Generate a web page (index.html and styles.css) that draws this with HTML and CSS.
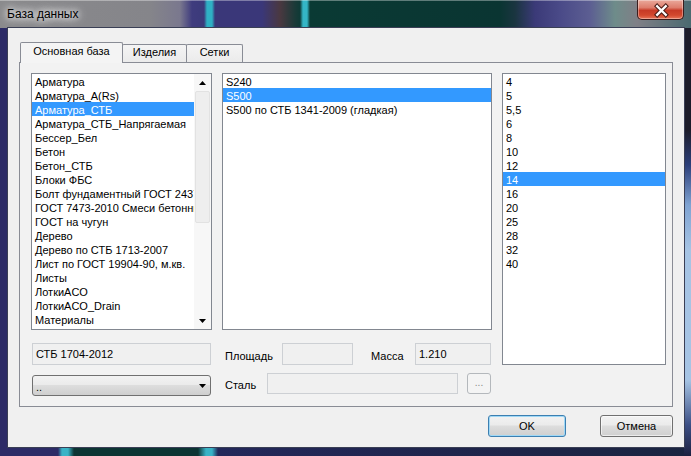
FILE: index.html
```html
<!DOCTYPE html>
<html lang="ru">
<head>
<meta charset="utf-8">
<title>База данных</title>
<link rel="stylesheet" href="styles.css">
</head>
<body>
<div class="window">
  <div class="titlebar">
    <span class="title">База данных</span>
    <div class="close">
      <svg width="47" height="19" viewBox="0 0 47 19">
        <path d="M20 5 L29 14 M29 5 L20 14" stroke="#4a1c16" stroke-width="4.6" stroke-linecap="square"/>
        <path d="M20 5 L29 14 M29 5 L20 14" stroke="#ffffff" stroke-width="2.4" stroke-linecap="square"/>
      </svg>
    </div>
  </div>
  <div class="frame">
    <div class="client">
      <div class="tabs">
        <div class="tab active t1">Основная база</div>
        <div class="tab t2">Изделия</div>
        <div class="tab t3">Сетки</div>
      </div>
      <div class="panel">
        <div class="listbox list-left">
          <div class="items">
            <div class="item">Арматура</div>
            <div class="item">Арматура_A(Rs)</div>
            <div class="item sel">Арматура_СТБ</div>
            <div class="item">Арматура_СТБ_Напрягаемая</div>
            <div class="item">Бессер_Бел</div>
            <div class="item">Бетон</div>
            <div class="item">Бетон_СТБ</div>
            <div class="item">Блоки ФБС</div>
            <div class="item">Болт фундаментный ГОСТ 24379.1-2012</div>
            <div class="item">ГОСТ 7473-2010 Смеси бетонные</div>
            <div class="item">ГОСТ на чугун</div>
            <div class="item">Дерево</div>
            <div class="item">Дерево по СТБ 1713-2007</div>
            <div class="item">Лист по ГОСТ 19904-90, м.кв.</div>
            <div class="item">Листы</div>
            <div class="item">ЛоткиACO</div>
            <div class="item">ЛоткиACO_Drain</div>
            <div class="item">Материалы</div>
            <div class="item">Металл</div>
          </div>
          <div class="vscroll">
            <div class="sb-btn"><svg width="7" height="4" viewBox="0 0 7 4"><polygon points="3.5,0 7,4 0,4" fill="#000"/></svg></div>
            <div class="sb-thumb"></div>
            <div class="sb-track"></div>
            <div class="sb-btn"><svg width="7" height="4" viewBox="0 0 7 4"><polygon points="0,0 7,0 3.5,4" fill="#000"/></svg></div>
          </div>
        </div>
        <div class="listbox list-mid">
          <div class="item">S240</div>
          <div class="item sel">S500</div>
          <div class="item">S500 по СТБ 1341-2009 (гладкая)</div>
        </div>
        <div class="listbox list-right">
          <div class="item">4</div>
          <div class="item">5</div>
          <div class="item">5,5</div>
          <div class="item">6</div>
          <div class="item">8</div>
          <div class="item">10</div>
          <div class="item">12</div>
          <div class="item sel">14</div>
          <div class="item">16</div>
          <div class="item">20</div>
          <div class="item">25</div>
          <div class="item">28</div>
          <div class="item">32</div>
          <div class="item">40</div>
        </div>
        <div class="field field-std">СТБ 1704-2012</div>
        <div class="mid-fields">
          <span class="label">Площадь</span>
          <div class="field"></div>
          <span class="label label-mass">Масса</span>
          <div class="field">1.210</div>
        </div>
        <div class="combo">
          <span>..</span>
          <svg width="7" height="4" viewBox="0 0 7 4"><polygon points="0,0 7,0 3.5,4" fill="#000"/></svg>
        </div>
        <div class="mid-steel">
          <span class="label label-steel">Сталь</span>
          <div class="field field-steel"></div>
          <div class="dots-btn">...</div>
        </div>
      </div>
      <div class="buttons">
        <button class="btn ok">OK</button>
        <button class="btn cancel">Отмена</button>
      </div>
    </div>
  </div>
</div>
</body>
</html>
```
FILE: styles.css
```css
* { box-sizing: border-box; }
html, body { margin: 0; padding: 0; }
body {
  width: 691px;
  height: 456px;
  overflow: hidden;
  font-family: "Liberation Sans", Arial, sans-serif;
  font-size: 11px;
  color: #000;
  background: #1e2448;
}

.window {
  width: 691px;
  height: 456px;
  display: flex;
  flex-direction: column;
  background:
    linear-gradient(180deg, #1c1c2a 0, #1c1c2a 130px, #2c3f7a 165px, #7fa3d2 205px, #a6c4e4 250px, #a6c4e4 380px, #3c4f85 425px, #1c2040 456px) right top / 7px 100% no-repeat,
    linear-gradient(90deg, #2c2b66 0, #2c2b66 58px, #39b3c6 62px, #39b3c6 68px, #0c3433 74px, #0c3433 198px, #39b3c6 206px, #39b3c6 212px, #23285a 218px, #1e2448 520px, #1a2440 691px);
}

.titlebar {
  height: 28px;
  display: flex;
  align-items: flex-start;
  border-top: 1px solid rgba(255,255,255,.35);
  background: linear-gradient(90deg,
    #8a8a8c 0px, #85858a 150px, #7a788e 180px, #3f3c7e 192px, #3b3a7a 204px,
    #2fb0c4 207px, #2fb0c4 212px, #3a3779 215px, #3a3779 262px, #4a3840 280px,
    #1a3a38 295px, #0e3a36 300px, #34b6c6 303px, #34b6c6 307px, #0a3a34 310px,
    #0a3532 500px, #1a3540 515px, #3b3a78 535px, #4a4a88 560px, #5c5e92 590px,
    #6e8c8a 615px, #7f7f86 637px, #4a6a70 691px);
}

.title {
  margin: 5px 0 0 7px;
  font-size: 12px;
  line-height: 16px;
  color: #000;
  text-shadow: 0 0 6px #fff, 0 0 10px rgba(255,255,255,.9), 0 0 16px rgba(255,255,255,.7);
}

.close {
  margin-left: auto;
  margin-right: 7px;
  margin-top: -1px;
  width: 47px;
  height: 20px;
  border: 1px solid #3b1d1d;
  border-top: none;
  border-radius: 0 0 5px 5px;
  background: linear-gradient(#eaa99b 0%, #de7d6c 40%, #c73a26 55%, #d2482e 80%, #e7765a 100%);
  box-shadow: inset 0 0 0 1px rgba(255,255,255,.35);
  display: flex;
  align-items: center;
  justify-content: center;
}
.close svg { display: block; margin-top: 1px; }

.frame {
  flex: 1;
  display: flex;
  padding: 0 7px 9px 8px;
}

.client {
  flex: 1;
  background: #f0f0f0;
  outline: 1px solid #3a3f55;
  display: flex;
  flex-direction: column;
}

.tabs {
  display: flex;
  align-items: flex-end;
  height: 21px;
  margin: 14px 0 0 12px;
}

.tab {
  height: 18px;
  margin-bottom: 1px;
  margin-left: -1px;
  border: 1px solid #898c95;
  border-bottom: none;
  border-radius: 2px 2px 0 0;
  background: linear-gradient(#f4f4f4, #ebebeb);
  line-height: 15px;
  text-align: center;
  white-space: nowrap;
}
.tab.active {
  position: relative;
  z-index: 1;
  height: 21px;
  margin-bottom: 0;
  margin-left: 0;
  background: #f4f4f4;
  line-height: 16px;
}
.t1 { width: 103px; }
.t2 { width: 65px; }
.t3 { width: 57px; }

.panel {
  margin: -1px 11px 0 11px;
  height: 345px;
  border: 1px solid #898c95;
  background: #f2f2f2;
  padding: 10px 6px 10px 11px;
  display: grid;
  grid-template-columns: 181px 270px 1fr;
  grid-template-rows: 262px 22px 23px;
  column-gap: 10px;
  row-gap: 8px;
}

.listbox {
  border: 1px solid #828790;
  background: #fff;
  overflow: hidden;
}
.list-left, .list-mid {
  height: 257px;
  align-self: start;
}
.list-left { display: flex; }
.list-left .items { flex: 1; min-width: 0; overflow: hidden; }
.list-right { grid-column: 3; grid-row: 1 / span 2; }

.item {
  height: 14px;
  line-height: 16px;
  padding-left: 3px;
  white-space: nowrap;
  overflow: hidden;
}
.item.sel { background: #3399ff; color: #fff; }

.vscroll {
  width: 17px;
  display: flex;
  flex-direction: column;
  background: #f7f7f7;
}
.sb-btn {
  height: 17px;
  display: flex;
  align-items: center;
  justify-content: center;
}
.sb-btn svg { display: block; }
.sb-thumb {
  height: 132px;
  margin: 0 1px;
  background: #eeeeee;
  border: 1px solid #e2e2e2;
  border-radius: 2px;
}
.sb-track { flex: 1; }

.field {
  height: 22px;
  border: 1px solid #cdd0d4;
  background: #f0f0f0;
  padding: 3px 0 0 3px;
  line-height: 14px;
  white-space: nowrap;
}
.field-std { margin: 0 1px; grid-column: 1; grid-row: 2; }

.mid-fields {
  grid-column: 2;
  grid-row: 2;
  display: grid;
  grid-template-columns: 60px 71px 62px 76px;
  align-items: start;
}
.label {
  padding-top: 2px;
  padding-left: 3px;
  line-height: 22px;
  white-space: nowrap;
}
.label-mass { padding-left: 18px; }

.combo {
  grid-column: 1;
  grid-row: 3;
  margin: 2px 1px 0 1px;
  height: 21px;
  border: 1px solid #707070;
  border-radius: 3px;
  background: linear-gradient(#f2f2f2 0%, #ebebeb 45%, #dddddd 50%, #cfcfcf 100%);
  display: flex;
  align-items: center;
  justify-content: space-between;
  padding: 2px 4px 0 3px;
}
.combo svg { display: block; margin-top: -2px; }

.mid-steel {
  grid-column: 2;
  grid-row: 3;
  display: flex;
  align-items: flex-start;
}
.label-steel {
  width: 45px;
  line-height: 21px;
}
.field-steel { width: 191px; height: 21px; }
.dots-btn {
  margin-left: 9px;
  width: 24px;
  height: 21px;
  border: 1px solid #b4b8bc;
  border-radius: 3px;
  background: #f4f4f4;
  color: #8a8a8a;
  text-align: center;
  line-height: 17px;
  font-size: 10px;
}

.buttons {
  display: flex;
  justify-content: flex-end;
  gap: 34px;
  margin-top: 8px;
  padding-right: 11px;
}
.btn {
  height: 22px;
  padding: 0;
  font-family: "Liberation Sans", Arial, sans-serif;
  font-size: 11px;
  color: #000;
  border: 1px solid #707070;
  border-radius: 3px;
  background: linear-gradient(#f2f2f2 0%, #ebebeb 45%, #dddddd 50%, #cfcfcf 100%);
  box-shadow: inset 0 0 0 1px rgba(255,255,255,.6);
  line-height: 18px;
}
.btn.ok {
  width: 78px;
  border-color: #3c7fb1;
  box-shadow: inset 0 0 0 1px #9fd8f6;
}
.btn.cancel { width: 73px; }
```
